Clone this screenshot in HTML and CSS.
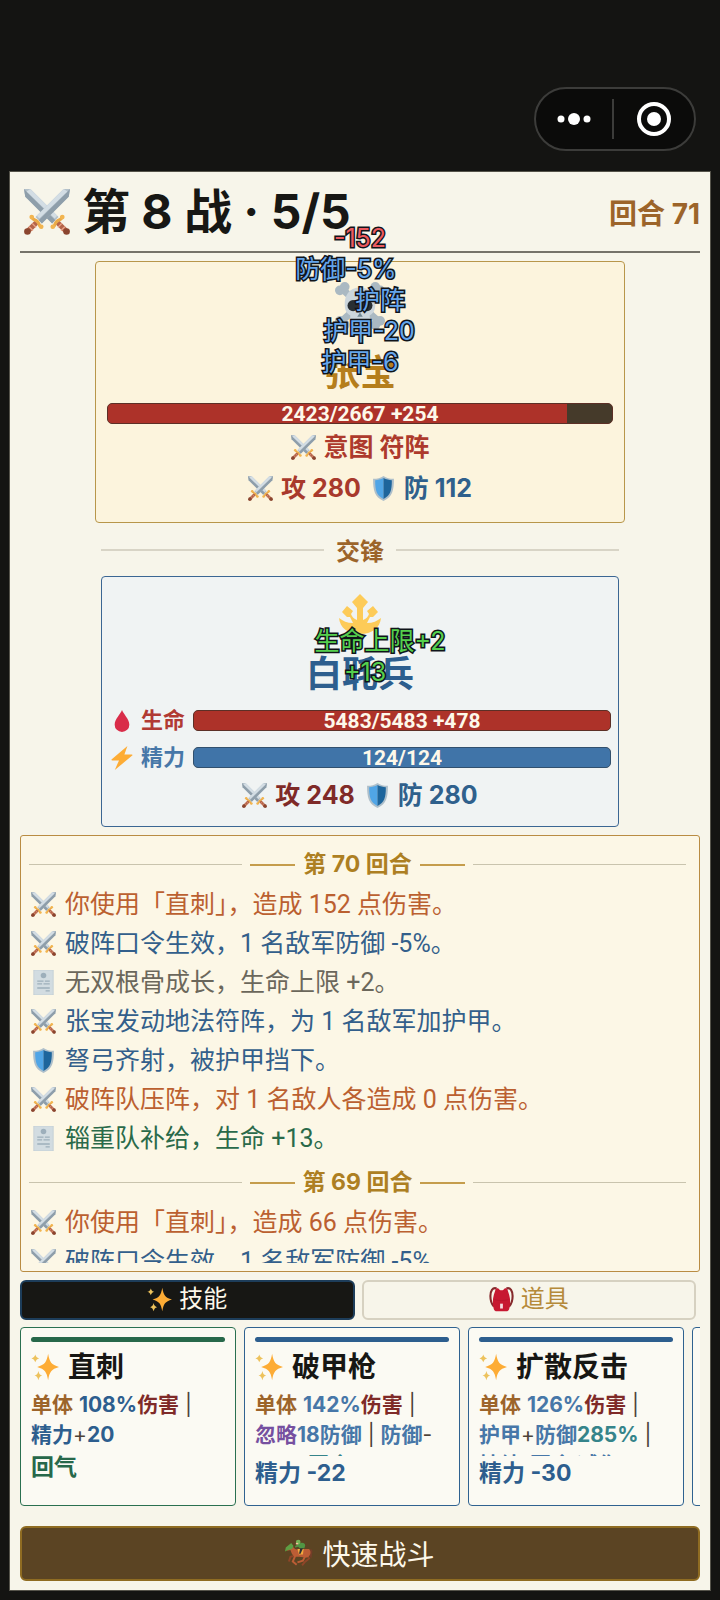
FILE: index.html
```
<!DOCTYPE html>
<html lang="zh-CN">
<head>
    <meta charset="UTF-8">
    <meta name="viewport" content="width=device-width, initial-scale=1.0">
    <title>第 8 战</title>
    <link rel="stylesheet" href="styles.css">
</head>
<body>
    <!-- 图标 -->
    <svg class="sprite" aria-hidden="true">
        <symbol id="i-swords" viewBox="0 0 36 36">
            <g id="sword">
                <path d="M0 0h5l22 22-5 5L1 6z" fill="#b4c1ca"/>
                <path d="M0 0l24.500 24.500-2.500 2.500L1 6z" fill="#8e9eaa"/>
                <path d="M5 0l21 21-2 2L2 2z" fill="#d3dde4"/>
                <path d="M26 26l7 7" stroke="#b5644a" stroke-width="4"/>
                <path d="M26.500 30l3-3M29 32.500l3-3" stroke="#e9a387" stroke-width="1"/>
                <path d="M22.500 29.500c2 0 1-2 3-4s4-1 4-3.500" fill="none" stroke="#eaaa48" stroke-width="2.500" stroke-linecap="round"/>
                <circle cx="22.500" cy="29.500" r="1.800" fill="#f2b550"/>
                <circle cx="30" cy="22" r="1.800" fill="#f2b550"/>
                <circle cx="33.300" cy="33.300" r="2.600" fill="#8b452f"/>
            </g>
            <use href="#sword" transform="matrix(-1 0 0 1 36 0)"/>
        </symbol>
        <symbol id="i-shield" viewBox="0 0 36 36">
            <path d="M18 0c4 3 9 4 15 4 0 17-2 26-15 32C5 30 3 21 3 4c6 0 11-1 15-4z" fill="#aebfca"/>
            <path d="M18 3c-4 2-8 3-12 3 0 15 2 22 12 27z" fill="#50a5e6"/>
            <path d="M18 3c4 2 8 3 12 3 0 15-2 22-12 27z" fill="#1d659c"/>
        </symbol>
        <symbol id="i-page" viewBox="0 0 36 36">
            <path d="M4 0h28v36H4z" fill="#d2dce1"/>
            <path d="M4 0h28v36H4z" fill="none" stroke="#becbd2" stroke-width="1"/>
            <circle cx="18" cy="8" r="4" fill="#9dafbb"/>
            <path d="M9 16h9M20 16h7M9 20h7M18 20h9M9 26h18M21 30h6" stroke="#9dafbb" stroke-width="2"/>
        </symbol>
        <symbol id="i-drop" viewBox="0 0 36 36">
            <path d="M18 0c2 6 12 15 12 24a12 12 0 0 1-24 0C6 15 16 6 18 0z" fill="#d92c49"/>
        </symbol>
        <symbol id="i-bolt" viewBox="0 0 36 40">
            <path d="M27 0L1 22c-1 1-1 2 1 2h11L6 40l29-24c1-1 1-2-1-2H22z" fill="#fdac35"/>
        </symbol>
        <symbol id="i-sparkles" viewBox="0 0 36 36">
            <path d="M22 1c2 11 4 14 14 17-10 3-12 6-14 17-2-11-4-14-14-17C18 15 20 12 22 1z" fill="#fdac35"/>
            <path d="M5.500 2c1 3 2 4 5 5-3 1-4 2-5 5-1-3-2-4-5-5 3-1 4-2 5-5zM9.500 23c1 4 2 5 5 6-3 1-4 2-5 6-1-4-2-5-5-6 3-1 4-2 5-6z" fill="#edc25c"/>
        </symbol>
        <symbol id="i-bag" viewBox="0 0 36 36">
            <path d="M11 2C5 0 2 6 2 13c0 8 2 12 5 15M25 2c6-2 9 4 9 11 0 8-2 12-5 15" fill="none" stroke="#85292c" stroke-width="3"/>
            <path d="M9 5c0-4 5-4 6-1 2 1 4 1 6 0 1-3 6-3 6 1l2 6c2 7 2 14 0 21-1 2-2 3-4 3H11c-2 0-3-1-4-3-2-7-2-14 0-21z" fill="#c71831"/>
            <path d="M8 18c6 2 14 2 20 0" fill="none" stroke="#b5152c" stroke-width="1"/>
            <path d="M16 24h4v7h-4z" fill="#f4dce0"/>
        </symbol>
        <symbol id="i-horse" viewBox="0 0 36 36">
            <path d="M31 14c3-2 5 0 4 4l-1 7c-2-2-3-5-3-8z" fill="#743d29"/>
            <path d="M14 21l-7 2-2 6M29 21l2 4-6 5-3 4" fill="none" stroke="#8f4528" stroke-width="2.500"/>
            <path d="M13 22l-3 7 5 4M26 22l-3 6-7 2" fill="none" stroke="#bc5d35" stroke-width="2.500"/>
            <path d="M8 8l5 5c5 2 12-1 18 0 3 3 2 8-1 10-5 2-11-1-17 0-4-2-5-6-6-9l-4 1-1-3z" fill="#bc5d35"/>
            <path d="M8 5l3 4-2 4-5 1-4 2 1-5z" fill="#5e9f43"/>
            <path d="M16 13h8l-1 7h-5z" fill="#f3aa3e"/>
            <path d="M20 10h4l-4 9h-2z" fill="#292f33"/>
            <path d="M18 6c4-2 7-1 8 2l-1 4h-6l-2-2-4 1v-2z" fill="#519544"/>
            <circle cx="17" cy="4" r="3" fill="#77b255"/>
            <path d="M14 5h3v2h-3z" fill="#f1c59c"/>
        </symbol>
        <symbol id="i-skull" viewBox="0 0 36 36">
            <path d="M5 5l26 23M31 5L5 28" stroke="#aab9c2" stroke-width="5"/>
            <g fill="#aab9c2">
                <circle cx="3.500" cy="6" r="3.500"/><circle cx="7" cy="3.500" r="3.500"/>
                <circle cx="32.500" cy="6" r="3.500"/><circle cx="29" cy="3.500" r="3.500"/>
                <circle cx="3.500" cy="28" r="3.500"/><circle cx="7" cy="31" r="3.500"/>
                <circle cx="32.500" cy="28" r="3.500"/><circle cx="29" cy="31" r="3.500"/>
            </g>
            <path d="M18 4c8 0 11 6 11 12 0 5-2 7-4 8v5c-4 3-10 3-14 0v-5c-2-1-4-3-4-8C7 10 10 4 18 4z" fill="#ccd6dc"/>
            <circle cx="13" cy="17" r="4" fill="#292f33"/>
            <circle cx="23" cy="17" r="4" fill="#292f33"/>
            <path d="M16 25l2-3 2 3z" fill="#738995"/>
        </symbol>
        <symbol id="i-crown" viewBox="0 0 42 46">
            <path d="M21 0l8 8-5 6v12c3-1 5-3 6-6l-2-3 6-5 5 6-5 5-3 0c-1 2-2 4-3 6 6 0 10-2 14-5-1 10-9 16-21 16S1 34 0 24c4 3 8 5 14 5-1-2-2-4-3-6l-3 0-5-5 5-6 6 5-2 3c1 3 3 5 6 6V14l-5-6z" fill="#fdcb58"/>
        </symbol>
    </svg>

    <!-- 顶部胶囊按钮 -->
    <header class="topbar">
        <div class="capsule">
            <button type="button" aria-label="更多">
                <svg width="34" height="16" viewBox="0 0 34 16"><g fill="#fff"><circle cx="4" cy="8" r="3.500"/><circle cx="17" cy="8" r="6"/><circle cx="30" cy="8" r="3.500"/></g></svg>
            </button>
            <button type="button" aria-label="关闭">
                <svg width="36" height="36" viewBox="0 0 36 36"><circle cx="18" cy="18" r="15" fill="none" stroke="#fff" stroke-width="4"/><circle cx="18" cy="18" r="7" fill="#fff"/></svg>
            </button>
        </div>
    </header>

    <main class="panel">
        <div class="title-bar">
            <h1><svg class="icon icon-xl"><use href="#i-swords"/></svg>第 8 战 · 5/5</h1>
            <span class="turn">回合 71</span>
        </div>

        <!-- 敌方 -->
        <section class="fighter enemy">
            <svg class="avatar"><use href="#i-skull"/></svg>
            <h2>张宝</h2>
            <div class="bar hp">
                <div class="fill" style="width: 91%"></div>
                <span>2423/2667 +254</span>
            </div>
            <p class="intent"><svg class="icon"><use href="#i-swords"/></svg>意图 符阵</p>
            <p class="stats">
                <span class="atk"><svg class="icon"><use href="#i-swords"/></svg>攻 280</span>
                <span class="def"><svg class="icon"><use href="#i-shield"/></svg>防 112</span>
            </p>
            <div class="floats">
                <span class="float dmg">-152</span>
                <span class="float buff left">防御-5%</span>
                <span class="float buff right">护阵</span>
                <span class="float buff near">护甲-20</span>
                <span class="float buff">护甲-6</span>
            </div>
        </section>

        <div class="versus">交锋</div>

        <!-- 我方 -->
        <section class="fighter player">
            <svg class="avatar"><use href="#i-crown"/></svg>
            <h2>白毦兵</h2>
            <div class="gauge life">
                <svg class="icon"><use href="#i-drop"/></svg>
                <b>生命</b>
                <div class="bar hp">
                    <div class="fill full" style="width: 100%"></div>
                    <span>5483/5483 +478</span>
                </div>
            </div>
            <div class="gauge energy">
                <svg class="icon"><use href="#i-bolt"/></svg>
                <b>精力</b>
                <div class="bar mp">
                    <div class="fill full" style="width: 100%"></div>
                    <span>124/124</span>
                </div>
            </div>
            <p class="stats">
                <span class="atk"><svg class="icon"><use href="#i-swords"/></svg>攻 248</span>
                <span class="def"><svg class="icon"><use href="#i-shield"/></svg>防 280</span>
            </p>
            <div class="floats">
                <span class="float heal right">生命上限+2</span>
                <span class="float heal">+13</span>
            </div>
        </section>

        <!-- 战斗记录 -->
        <section class="log">
            <div class="log-view">
                <div class="round">
                    <h3><span>第 70 回合</span></h3>
                    <p class="hit"><svg class="icon"><use href="#i-swords"/></svg>你使用「直刺」，造成 152 点伤害。</p>
                    <p class="info"><svg class="icon"><use href="#i-swords"/></svg>破阵口令生效，1 名敌军防御 -5%。</p>
                    <p class="note"><svg class="icon"><use href="#i-page"/></svg>无双根骨成长，生命上限 +2。</p>
                    <p class="info"><svg class="icon"><use href="#i-swords"/></svg>张宝发动地法符阵，为 1 名敌军加护甲。</p>
                    <p class="info"><svg class="icon"><use href="#i-shield"/></svg>弩弓齐射，被护甲挡下。</p>
                    <p class="hit"><svg class="icon"><use href="#i-swords"/></svg>破阵队压阵，对 1 名敌人各造成 0 点伤害。</p>
                    <p class="gain"><svg class="icon"><use href="#i-page"/></svg>辎重队补给，生命 +13。</p>
                </div>
                <div class="round">
                    <h3><span>第 69 回合</span></h3>
                    <p class="hit"><svg class="icon"><use href="#i-swords"/></svg>你使用「直刺」，造成 66 点伤害。</p>
                    <p class="info"><svg class="icon"><use href="#i-swords"/></svg>破阵口令生效，1 名敌军防御 -5%。</p>
                </div>
            </div>
        </section>

        <!-- 技能 / 道具 -->
        <div class="tabs">
            <button type="button" class="tab active"><svg class="icon"><use href="#i-sparkles"/></svg>技能</button>
            <button type="button" class="tab"><svg class="icon"><use href="#i-bag"/></svg>道具</button>
        </div>

        <div class="skills">
            <button type="button" class="skill green">
                <span class="name"><svg class="icon"><use href="#i-sparkles"/></svg>直刺</span>
                <span class="desc"><b class="c-target">单体</b> <b class="c-num">108%</b><b class="c-dmg">伤害</b> |<br><b class="c-num">精力</b>+<b class="c-num">20</b></span>
                <span class="cost">回气</span>
            </button>
            <button type="button" class="skill">
                <span class="name"><svg class="icon"><use href="#i-sparkles"/></svg>破甲枪</span>
                <span class="desc"><b class="c-target">单体</b> <b class="c-def">142%</b><b class="c-dmg">伤害</b> |<br><b class="c-pierce">忽略</b><b class="c-def">18防御</b> | <b class="c-def">防御</b>-<br><b class="c-teal">5% 2回合</b></span>
                <span class="cost">精力 -22</span>
            </button>
            <button type="button" class="skill">
                <span class="name"><svg class="icon"><use href="#i-sparkles"/></svg>扩散反击</span>
                <span class="desc"><b class="c-target">单体</b> <b class="c-def">126%</b><b class="c-dmg">伤害</b> |<br><b class="c-def">护甲</b>+<b class="c-def">防御</b><b class="c-teal">285%</b> |<br><b class="c-def">持续1回合 减伤55%</b></span>
                <span class="cost">精力 -30</span>
            </button>
            <button type="button" class="skill" aria-label="下一个技能"></button>
        </div>

        <button type="button" class="fast"><svg class="icon"><use href="#i-horse"/></svg>快速战斗</button>
    </main>
</body>
</html>
```

FILE: styles.css
```
* {
    box-sizing: border-box;
}
body {
    margin: 0;
    padding-bottom: 9px;
    background-color: #141412;
    font-family: Inter, "Noto Sans CJK SC", sans-serif;
    font-size: 25px;
    color: #171714;
}
h1, h2, h3, p {
    margin: 0;
}
button {
    font-family: inherit;
    cursor: pointer;
}
.sprite {
    position: absolute;
    width: 0;
    height: 0;
}
.icon {
    width: 25px;
    height: 25px;
    flex: none;
}

/* 顶部 */
.topbar {
    display: flex;
    justify-content: flex-end;
    height: 171px;
    padding: 87px 24px 0;
}
.capsule {
    display: flex;
    width: 162px;
    height: 64px;
    padding-right: 2px;
    border: 2px solid #3c3c3a;
    border-radius: 32px;
    background-color: #0b0b0a;
}
.capsule button {
    display: flex;
    flex: 1;
    align-items: center;
    justify-content: center;
    padding: 0;
    border: none;
    background: none;
}
.capsule button + button {
    position: relative;
    padding-left: 4px;
}
.capsule button + button::before {
    content: "";
    position: absolute;
    left: 0;
    top: 10px;
    bottom: 10px;
    width: 2px;
    background-color: #3c3c3a;
}

/* 主面板 */
.panel {
    margin: 0 9px;
    padding: 0 10px 9px;
    border: 1px solid #55534a;
    background-color: #f7f5ea;
}
.title-bar {
    display: flex;
    align-items: center;
    justify-content: space-between;
    height: 81px;
    padding-left: 4px;
    border-bottom: 2px solid #75736a;
}
h1 {
    display: flex;
    align-items: center;
    gap: 12px;
    font-size: 48px;
    line-height: 56px;
}
.icon-xl {
    width: 46px;
    height: 46px;
}
.turn {
    font-size: 28px;
    font-weight: bold;
    color: #9c642a;
}

/* 角色卡片 */
.fighter {
    position: relative;
    margin: 0 auto;
    border: 1px solid;
    border-radius: 4px;
    text-align: center;
}
.enemy {
    width: 78%;
    margin-top: 8px;
    padding: 20px 11px 15px;
    border-color: #b8964a;
    background-color: #fcf4dd;
}
.player {
    width: 518px;
    max-width: 100%;
    padding: 17px 7px 12px;
    border-color: #3b6693;
    background-color: #f0f3f3;
}
.avatar {
    display: block;
    width: 50px;
    height: 50px;
    margin: 0 auto;
}
.player .avatar {
    width: 42px;
    height: 46px;
}
h2 {
    font-size: 36px;
    line-height: 48px;
}
.enemy h2 {
    margin: 17px 0 6px;
    color: #b57e1c;
}
.player h2 {
    margin: 10px 0 8px;
    color: #2d5e8e;
}
.bar {
    position: relative;
    height: 21px;
    border: 1px solid #5c2f26;
    border-radius: 5px;
    background-color: #453a2a;
}
.bar .fill {
    height: 100%;
    border-radius: 4px 0 0 4px;
}
.bar .fill.full {
    border-radius: 4px;
}
.hp .fill {
    background-color: #ad3229;
}
.mp {
    border-color: #31506e;
}
.mp .fill {
    background-color: #4074a8;
}
.bar span {
    position: absolute;
    inset: -2px 0;
    font-family: Roboto, sans-serif;
    font-size: 21px;
    font-weight: bold;
    line-height: 24px;
    color: #fdf8ea;
}
.intent, .stats, .stats span {
    display: flex;
    align-items: center;
    justify-content: center;
    gap: 8px;
    font-weight: bold;
    line-height: 38px;
}
.intent {
    margin: 4px 0 3px;
    color: #ad3a2c;
}
.stats {
    gap: 10px;
}
.atk {
    color: #a8392c;
}
.player .atk {
    color: #7f2a28;
}
.def {
    color: #2f608c;
}
.gauge {
    display: flex;
    align-items: center;
    height: 29px;
    margin-bottom: 8px;
    padding-left: 2px;
}
.gauge .icon {
    width: 22px;
    height: 24px;
}
.gauge b {
    width: 44px;
    margin: 0 8px;
    font-size: 22px;
    line-height: 29px;
}
.gauge .bar {
    flex: 1;
}
.life b {
    color: #b13a33;
}
.energy b {
    color: #4777a8;
}
.gauge.energy {
    margin-bottom: 4px;
}

/* 飘字 */
.floats {
    position: absolute;
    top: -39px;
    left: 0;
    right: 0;
    display: flex;
    flex-direction: column;
    align-items: center;
    pointer-events: none;
}
.player .floats {
    top: 49px;
}
.float {
    font-size: 25px;
    line-height: 31px;
    -webkit-text-stroke: 3px #10141a;
    paint-order: stroke fill;
}
.float.left {
    margin-right: 28px;
}
.float.right {
    margin-left: 40px;
}
.float.near {
    margin-left: 18px;
}
.dmg {
    color: #ec5a5f;
}
.buff {
    color: #64a5ec;
}
.heal {
    color: #55cf4d;
}
.player .heal:last-child {
    margin-left: 10px;
}

.versus {
    display: flex;
    align-items: center;
    gap: 12px;
    width: 518px;
    max-width: 100%;
    height: 53px;
    margin: 0 auto;
    font-size: 24px;
    font-weight: bold;
    color: #9c642a;
}
.versus::before, .versus::after {
    content: "";
    flex: 1;
    height: 2px;
    background-color: #d8d4c6;
}

/* 战斗记录 */
.log {
    height: 437px;
    margin-top: 8px;
    padding: 8px;
    border: 1px solid #b98c43;
    border-radius: 3px;
    background-color: #fcf7e6;
}
.log-view {
    height: 100%;
    overflow: hidden;
}
.round {
    padding-bottom: 4px;
}
.round h3 {
    display: flex;
    align-items: center;
    gap: 8px;
    padding-right: 5px;
    font-size: 23px;
    line-height: 41px;
    color: #ad7f22;
}
.round h3::before, .round h3::after {
    content: "";
    flex: 1;
    height: 1px;
    background-color: #c9c4ae;
}
.round h3 span {
    display: flex;
    align-items: center;
    gap: 8px;
}
.round h3 span::before, .round h3 span::after {
    content: "";
    width: 45px;
    height: 2px;
    background-color: #c59d4c;
}
.round p {
    display: flex;
    align-items: center;
    gap: 9px;
    padding-left: 2px;
    font-family: Roboto, "Noto Sans CJK SC", sans-serif;
    line-height: 39px;
    white-space: nowrap;
}
.hit {
    color: #bb6030;
}
.info {
    color: #335f8b;
}
.note {
    color: #6b675b;
}
.gain {
    color: #2a6a4a;
}

/* 标签 */
.tabs {
    display: flex;
    gap: 7px;
    margin: 8px 4px 7px 0;
}
.tab {
    display: flex;
    flex: 1;
    align-items: center;
    justify-content: center;
    gap: 7px;
    height: 40px;
    padding: 0 0 2px;
    border: 2px solid #d6d1c1;
    border-radius: 6px;
    background-color: #f7f5ea;
    font-size: 24px;
    line-height: 32px;
    color: #b58a3a;
}
.tab.active {
    border-color: #1d3d5a;
    background-color: #171714;
    color: #fdf8ea;
}

/* 技能卡片 */
.skills {
    display: flex;
    gap: 8px;
    overflow: hidden;
}
.skill {
    display: flex;
    flex: none;
    flex-direction: column;
    width: 216px;
    height: 179px;
    padding: 9px 10px;
    border: 1px solid #2f6290;
    border-radius: 4px;
    background-color: #fbfaf3;
    text-align: left;
    color: #2d5e8e;
}
.skill.green {
    border-color: #2a7050;
    color: #27684a;
}
.skill::before {
    content: "";
    flex: none;
    width: 100%;
    height: 5px;
    border-radius: 3px;
    background-color: currentColor;
}
.name {
    display: flex;
    align-items: center;
    gap: 9px;
    margin-top: 2px;
    font-size: 28px;
    font-weight: bold;
    line-height: 46px;
    color: #171714;
}
.name .icon {
    width: 28px;
    height: 28px;
}
.desc {
    flex: none;
    max-height: 66px;
    overflow: hidden;
    font-size: 21px;
    line-height: 30px;
    white-space: nowrap;
    color: #4c4238;
}
.cost {
    font-size: 23px;
    font-weight: bold;
    line-height: 34px;
}
.c-target {
    color: #9c642a;
}
.c-num {
    color: #2d5e8e;
}
.c-def {
    color: #4777a8;
}
.c-dmg {
    color: #7f2a28;
}
.c-pierce {
    color: #7650a0;
}
.c-teal {
    color: #35848a;
}

.fast {
    display: flex;
    align-items: center;
    justify-content: center;
    gap: 9px;
    width: 100%;
    height: 55px;
    margin-top: 20px;
    padding: 0 0 2px;
    border: 2px solid #8f6c22;
    border-radius: 6px;
    background-color: #5b4423;
    font-size: 28px;
    color: #fdf8ea;
}
.fast .icon {
    width: 28px;
    height: 28px;
}
```
